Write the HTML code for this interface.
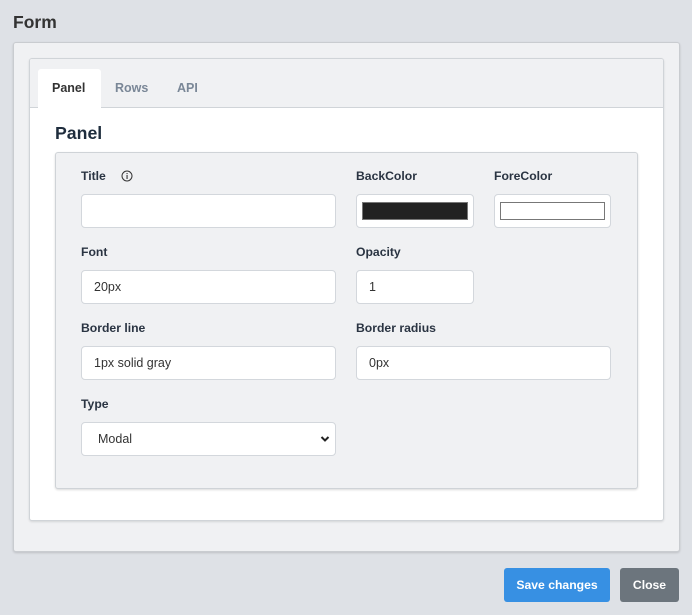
<!DOCTYPE html>
<html><head><style>
*{box-sizing:border-box;margin:0;padding:0}
body{width:692px;height:615px;background:#dee1e6;font-family:"Liberation Sans",Arial,sans-serif;position:relative;overflow:hidden}
.a{position:absolute}
.lbl{position:absolute;font-size:12.2px;font-weight:bold;color:#2a3442}
.inp{position:absolute;background:#fff;border:1px solid #d3d7dc;border-radius:4px;height:34px;font-size:12.5px;color:#333;padding-left:12px;line-height:32px}
.btn{position:absolute;top:568px;height:34px;border-radius:3px;color:#fff;font-weight:bold;font-size:12.2px;line-height:34px;text-align:center}
</style></head><body>
<div class="a" style="left:13px;top:12px;font-size:17.5px;font-weight:bold;color:#333">Form</div>
<div class="a" style="left:13px;top:42px;width:667px;height:510px;background:#f0f1f3;border:1px solid #c9ccd0;border-radius:3px;box-shadow:0 1px 2px rgba(0,0,0,.15)"></div>
<div class="a" style="left:29px;top:58px;width:635px;height:463px;background:#fff;border:1px solid #d0d4d8;border-radius:3px;box-shadow:0 1px 2px rgba(0,0,0,.12);overflow:hidden">
  <div class="a" style="left:0;top:0;width:635px;height:49px;background:#f0f1f3;border-bottom:1px solid #d0d4d8"></div>
  <div class="a" style="left:8px;top:10px;width:63px;height:40px;background:#fff;border-radius:3px 3px 0 0"></div>
  <div class="a" style="left:22px;top:22px;font-size:12.5px;font-weight:bold;color:#333">Panel</div>
  <div class="a" style="left:85px;top:22px;font-size:12.5px;font-weight:bold;color:#7a8797">Rows</div>
  <div class="a" style="left:147px;top:22px;font-size:12.5px;font-weight:bold;color:#7a8797">API</div>
  <div class="a" style="left:25px;top:64px;font-size:17.7px;font-weight:bold;color:#1f2d3d">Panel</div>
</div>
<div class="a" style="left:55px;top:152px;width:583px;height:337px;background:#f0f1f3;border:1px solid #cfd3d7;border-radius:3px;box-shadow:0 1px 2px rgba(0,0,0,.15)"></div>
<div class="lbl" style="left:81px;top:169px">Title</div>
<svg class="a" style="left:121px;top:170px" width="12" height="12" viewBox="0 0 12 12"><circle cx="6" cy="6" r="5" fill="none" stroke="#333" stroke-width="1"/><rect x="5.5" y="5" width="1.1" height="4" fill="#333"/><rect x="5.5" y="3" width="1.1" height="1.1" fill="#333"/></svg>
<div class="lbl" style="left:356px;top:169px">BackColor</div>
<div class="lbl" style="left:494px;top:169px">ForeColor</div>
<div class="inp" style="left:81px;top:194px;width:255px"></div>
<div class="inp" style="left:356px;top:194px;width:118px"><div class="a" style="left:5px;top:7px;width:106px;height:18px;background:#222;border:1px solid #777"></div></div>
<div class="inp" style="left:494px;top:194px;width:117px"><div class="a" style="left:5px;top:7px;width:105px;height:18px;background:#fff;border:1px solid #777"></div></div>
<div class="lbl" style="left:81px;top:245px">Font</div>
<div class="lbl" style="left:356px;top:245px">Opacity</div>
<div class="inp" style="left:81px;top:270px;width:255px">20px</div>
<div class="inp" style="left:356px;top:270px;width:118px">1</div>
<div class="lbl" style="left:81px;top:321px">Border line</div>
<div class="lbl" style="left:356px;top:321px">Border radius</div>
<div class="inp" style="left:81px;top:346px;width:255px">1px solid gray</div>
<div class="inp" style="left:356px;top:346px;width:255px">0px</div>
<div class="lbl" style="left:81px;top:397px">Type</div>
<div class="inp" style="left:81px;top:422px;width:255px;padding-left:16px">Modal
<svg class="a" style="left:238px;top:12px" width="10" height="8" viewBox="0 0 10 8"><path d="M1.5 2 L5 5.5 L8.5 2" fill="none" stroke="#222" stroke-width="2"/></svg></div>
<div class="btn" style="left:504px;width:106px;background:#3790e3">Save changes</div>
<div class="btn" style="left:620px;width:59px;background:#6c757d">Close</div>
</body></html>
